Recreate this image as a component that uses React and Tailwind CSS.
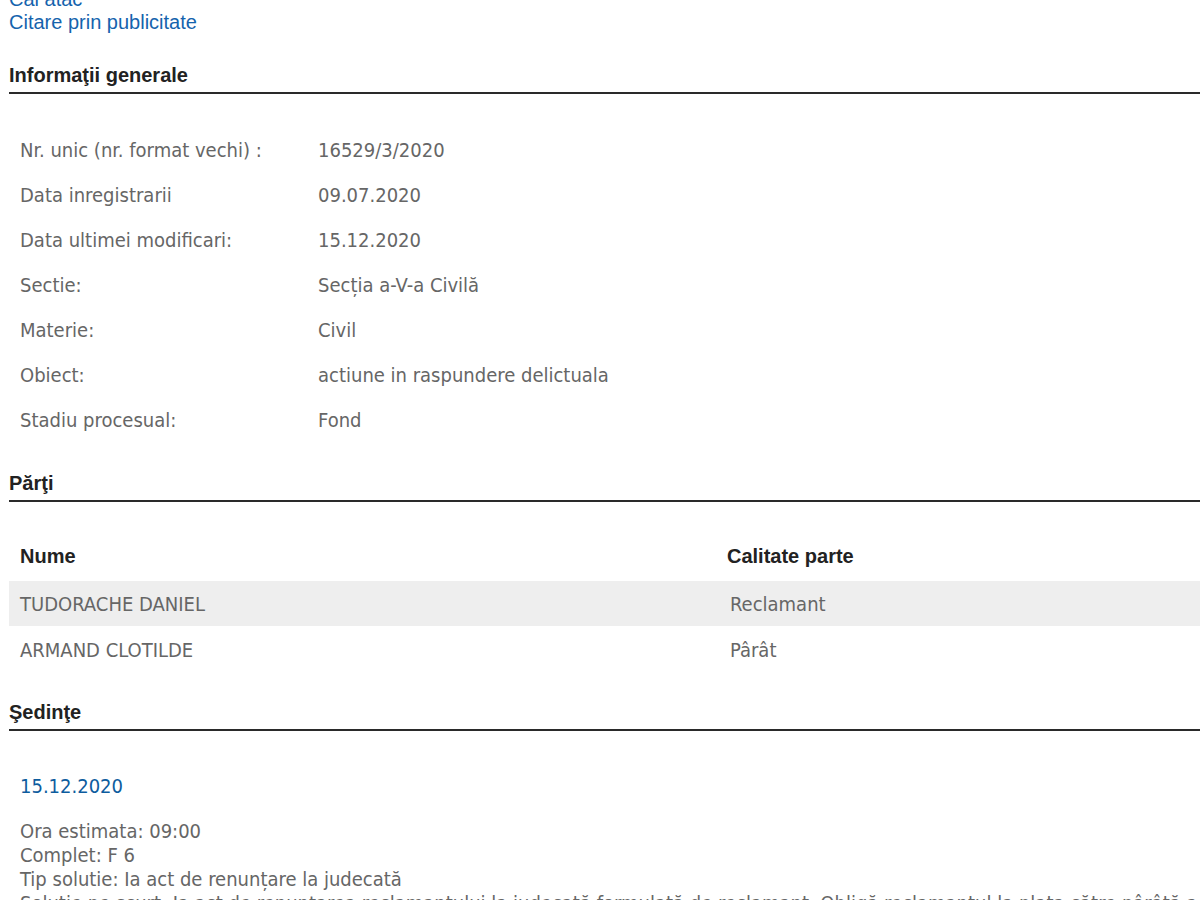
const info = [
  ['Nr. unic (nr. format vechi) :', '16529/3/2020'],
  ['Data inregistrarii', '09.07.2020'],
  ['Data ultimei modificari:', '15.12.2020'],
  ['Sectie:', 'Secția a-V-a Civilă'],
  ['Materie:', 'Civil'],
  ['Obiect:', 'actiune in raspundere delictuala'],
  ['Stadiu procesual:', 'Fond'],
];

const parti = [
  ['TUDORACHE DANIEL', 'Reclamant'],
  ['ARMAND CLOTILDE', 'Pârât'],
];

const body = "font-['DejaVu_Sans_Condensed','DejaVu_Sans',sans-serif] text-[20px] text-[#666]";

function Heading({ children, className = '' }) {
  return (
    <h2
      className={`font-['Liberation_Sans',Arial,sans-serif] font-bold text-[20px] leading-[24px] text-[#222] pb-[5px] border-b-2 border-[#2a2a2a] ${className}`}
    >
      {children}
    </h2>
  );
}

export default function App() {
  return (
    <div className="w-[1200px] h-[900px] overflow-hidden bg-white">
      <div className="pl-[9px] mt-[-12px]">
        <div className="font-['Liberation_Sans',Arial,sans-serif] text-[20px] leading-[23px] text-[#1563ad]">
          <a className="block">Căi atac</a>
          <a className="block">Citare prin publicitate</a>
        </div>

        <Heading className="mt-[29px]">Informaţii generale</Heading>

        <div className={`${body} mt-[33px]`}>
          {info.map(([k, v]) => (
            <div key={k} className="flex h-[45px] items-center">
              <div className="w-[309px] pl-[11px]">{k}</div>
              <div>{v}</div>
            </div>
          ))}
        </div>

        <Heading className="mt-[29px]">Părţi</Heading>

        <div className="mt-[34px]">
          <div className="flex h-[45px] items-center pb-[5px] font-['Liberation_Sans',Arial,sans-serif] font-bold text-[20px] text-[#222]">
            <div className="w-[707px] pl-[11px]">Nume</div>
            <div className="pl-[11px]">Calitate parte</div>
          </div>
          {parti.map(([n, c], i) => (
            <div
              key={n}
              className={`${body} flex h-[45px] items-center ${i % 2 === 0 ? 'bg-[#eeeeee]' : ''} ${i > 0 ? 'mt-px' : ''}`}
            >
              <div className="w-[707px] pl-[11px]">{n}</div>
              <div className="pl-[14px]">{c}</div>
            </div>
          ))}
        </div>

        <Heading className="mt-[28px]">Şedinţe</Heading>

        <div className={`${body} pl-[11px] mt-[43px] leading-[24px]`}>
          <div className="text-[#0d5c9e]">15.12.2020</div>
          <div className="mt-[21px]">
            <div>Ora estimata: 09:00</div>
            <div>Complet: F 6</div>
            <div>Tip solutie: Ia act de renunțare la judecată</div>
            <div className="whitespace-nowrap">
              Solutie pe scurt: Ia act de renunţarea reclamantului la judecată formulată de reclamant. Obligă reclamantul la plata către pârâtă a cheltuielilor de judecată
            </div>
          </div>
        </div>
      </div>
    </div>
  );
}
